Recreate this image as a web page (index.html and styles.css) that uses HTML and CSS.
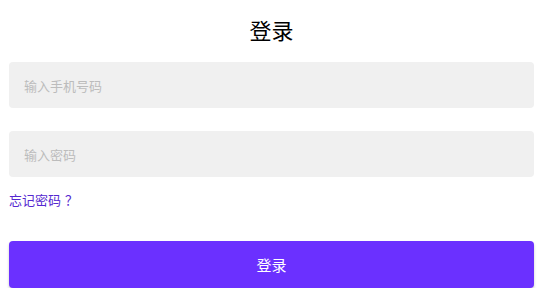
FILE: index.html
```html
<!DOCTYPE html>
<html lang="zh">
<head>
<meta charset="utf-8">
<link rel="stylesheet" href="styles.css">
</head>
<body>
<div class="page">
  <h1 class="title">登录</h1>
  <div class="field"><input class="input" type="text" placeholder="输入手机号码"></div>
  <div class="field"><input class="input" type="password" placeholder="输入密码"></div>
  <a class="forgot" href="#">忘记密码<span class="qmark">？</span></a>
  <button class="submit" type="button">登录</button>
</div>
</body>
</html>
```
FILE: styles.css
```css
html, body {
  margin: 0;
  padding: 0;
  background: #ffffff;
}
body {
  font-family: "Noto Sans CJK SC", "Noto Sans", sans-serif;
}
.page {
  display: flex;
  flex-direction: column;
  padding: 0 7px 0 9px;
}
.title {
  margin: 0;
  height: 58px;
  line-height: 58px;
  text-align: center;
  font-size: 22px;
  font-weight: 400;
  color: #000;
}
.field {
  margin-top: 4px;
}
.field + .field {
  margin-top: 23px;
}
.input {
  box-sizing: border-box;
  width: 100%;
  height: 46px;
  border: none;
  border-radius: 4px;
  background: #f0f0f0;
  padding: 0 15px;
  font-family: inherit;
  font-size: 13px;
  color: #333;
  outline: none;
}
.input::placeholder {
  color: #bcbcbc;
}
.forgot {
  align-self: flex-start;
  margin-top: 13px;
  font-size: 13px;
  line-height: 20px;
  color: #5528d0;
  text-decoration: none;
}
.qmark {
  padding-left: 4px;
}
.submit {
  margin-top: 31px;
  height: 47px;
  border: none;
  border-radius: 4px;
  background: #6b30ff;
  color: #fff;
  font-family: inherit;
  font-size: 15px;
  box-shadow: 0 2px 3px rgba(0, 0, 0, 0.2);
}
```
